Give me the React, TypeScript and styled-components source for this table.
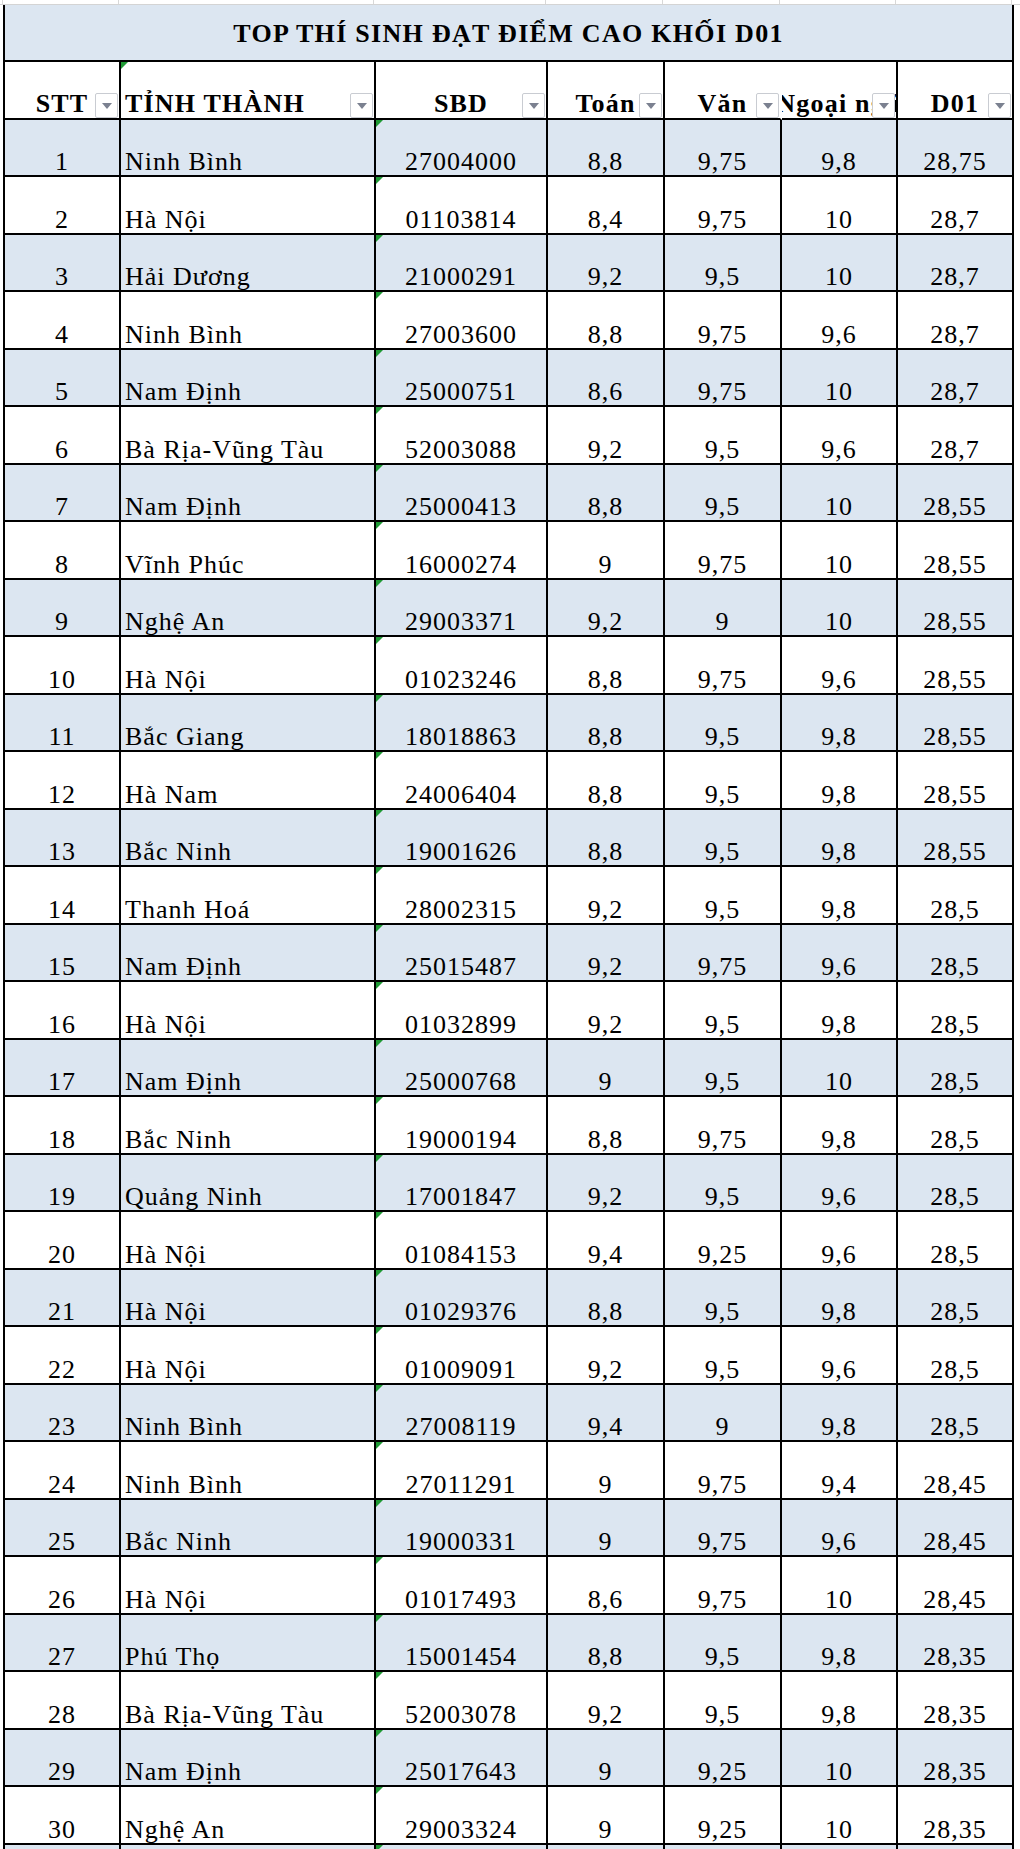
import * as React from "react";
import styled, { createGlobalStyle } from "styled-components";

const GlobalStyle = createGlobalStyle`
  html, body {
    margin: 0;
    padding: 0;
    background: #ffffff;
  }
`;

const SERIF = `"Liberation Serif", "Times New Roman", "DejaVu Serif", serif`;
const BLUE = "#dce6f1";
const COLS = "116px 255px 172px 117px 117px 116px 116px";

const Page = styled.div`
  width: 1020px;
  height: 1849px;
  overflow: hidden;
  background: #fff;
  font-family: ${SERIF};
  color: #000;
`;

const TopStrip = styled.div`
  display: grid;
  grid-template-columns: 3px ${COLS};
  height: 5px;
  box-sizing: border-box;
  border-bottom: 1px solid #d4d4d4;

  & > div {
    border-right: 1px solid #d8d8d8;
  }
`;

const Sheet = styled.div`
  margin-left: 3px;
  width: 1011px;
  border-left: 2px solid #000;
  box-sizing: border-box;
`;

const TitleRow = styled.div`
  height: 57px;
  box-sizing: border-box;
  background: ${BLUE};
  border-right: 2px solid #000;
  border-bottom: 2px solid #000;
  display: flex;
  align-items: center;
  justify-content: center;
  padding-top: 2px;
  font-family: ${SERIF};
  font-weight: 700;
  font-size: 26px;
  letter-spacing: 1.3px;
`;

const Row = styled.div<{ $tall?: boolean; $blue?: boolean }>`
  display: grid;
  grid-template-columns: ${COLS};
  height: ${(p) => (p.$tall ? 58 : 57)}px;
  background: ${(p) => (p.$blue ? BLUE : "#fff")};
`;

const Cell = styled.div<{ $align?: "left" | "center"; $open?: boolean }>`
  position: relative;
  box-sizing: border-box;
  border-right: 2px solid ${(p) => (p.$open ? "transparent" : "#000")};
  border-bottom: 2px solid #000;
  display: flex;
  align-items: flex-end;
  justify-content: ${(p) => (p.$align === "left" ? "flex-start" : "center")};
  padding: ${(p) => (p.$align === "left" ? "0 2px 0 4px" : "0 2px")};
  font-family: ${SERIF};
  font-size: 26px;
  line-height: 26px;
  letter-spacing: 1px;
  white-space: nowrap;
  overflow: hidden;
`;

const HeadCell = styled(Cell)`
  font-weight: 700;
  letter-spacing: 1.2px;
  padding-bottom: 1px;
`;

const FilterButton = styled.span`
  position: absolute;
  right: 1px;
  bottom: 0;
  width: 23px;
  height: 25px;
  box-sizing: border-box;
  background: #fff;
  border: 1px solid #c9ccd2;
  border-radius: 2px;
  display: flex;
  align-items: center;
  justify-content: center;

  &::after {
    content: "";
    border-left: 5px solid transparent;
    border-right: 5px solid transparent;
    border-top: 6px solid #7b8190;
  }
`;

const Marker = styled.span`
  position: absolute;
  left: 0;
  top: 0;
  width: 0;
  height: 0;
  border-top: 7px solid #1f9a35;
  border-right: 7px solid transparent;
`;

type Rec = [string, string, string, string, string, string];

const rows: Rec[] = [
  ["Ninh Bình", "27004000", "8,8", "9,75", "9,8", "28,75"],
  ["Hà Nội", "01103814", "8,4", "9,75", "10", "28,7"],
  ["Hải Dương", "21000291", "9,2", "9,5", "10", "28,7"],
  ["Ninh Bình", "27003600", "8,8", "9,75", "9,6", "28,7"],
  ["Nam Định", "25000751", "8,6", "9,75", "10", "28,7"],
  ["Bà Rịa-Vũng Tàu", "52003088", "9,2", "9,5", "9,6", "28,7"],
  ["Nam Định", "25000413", "8,8", "9,5", "10", "28,55"],
  ["Vĩnh Phúc", "16000274", "9", "9,75", "10", "28,55"],
  ["Nghệ An", "29003371", "9,2", "9", "10", "28,55"],
  ["Hà Nội", "01023246", "8,8", "9,75", "9,6", "28,55"],
  ["Bắc Giang", "18018863", "8,8", "9,5", "9,8", "28,55"],
  ["Hà Nam", "24006404", "8,8", "9,5", "9,8", "28,55"],
  ["Bắc Ninh", "19001626", "8,8", "9,5", "9,8", "28,55"],
  ["Thanh Hoá", "28002315", "9,2", "9,5", "9,8", "28,5"],
  ["Nam Định", "25015487", "9,2", "9,75", "9,6", "28,5"],
  ["Hà Nội", "01032899", "9,2", "9,5", "9,8", "28,5"],
  ["Nam Định", "25000768", "9", "9,5", "10", "28,5"],
  ["Bắc Ninh", "19000194", "8,8", "9,75", "9,8", "28,5"],
  ["Quảng Ninh", "17001847", "9,2", "9,5", "9,6", "28,5"],
  ["Hà Nội", "01084153", "9,4", "9,25", "9,6", "28,5"],
  ["Hà Nội", "01029376", "8,8", "9,5", "9,8", "28,5"],
  ["Hà Nội", "01009091", "9,2", "9,5", "9,6", "28,5"],
  ["Ninh Bình", "27008119", "9,4", "9", "9,8", "28,5"],
  ["Ninh Bình", "27011291", "9", "9,75", "9,4", "28,45"],
  ["Bắc Ninh", "19000331", "9", "9,75", "9,6", "28,45"],
  ["Hà Nội", "01017493", "8,6", "9,75", "10", "28,45"],
  ["Phú Thọ", "15001454", "8,8", "9,5", "9,8", "28,35"],
  ["Bà Rịa-Vũng Tàu", "52003078", "9,2", "9,5", "9,8", "28,35"],
  ["Nam Định", "25017643", "9", "9,25", "10", "28,35"],
  ["Nghệ An", "29003324", "9", "9,25", "10", "28,35"],
];

export default function App() {
  return (
    <Page>
      <GlobalStyle />
      <TopStrip>
        {Array.from({ length: 8 }).map((_, i) => (
          <div key={i} />
        ))}
      </TopStrip>
      <Sheet>
        <TitleRow>TOP THÍ SINH ĐẠT ĐIỂM CAO KHỐI D01</TitleRow>
        <Row $tall>
          <HeadCell>
            STT
            <FilterButton />
          </HeadCell>
          <HeadCell $align="left">
            <Marker />
            TỈNH THÀNH
            <FilterButton />
          </HeadCell>
          <HeadCell>
            SBD
            <FilterButton />
          </HeadCell>
          <HeadCell>
            Toán
            <FilterButton />
          </HeadCell>
          <HeadCell $open>
            Văn
            <FilterButton />
          </HeadCell>
          <HeadCell>
            Ngoại ngữ
            <FilterButton />
          </HeadCell>
          <HeadCell>
            D01
            <FilterButton />
          </HeadCell>
        </Row>
        {rows.map((r, i) => (
          <Row key={i} $blue={i % 2 === 0} $tall={i % 2 === 1}>
            <Cell>{i + 1}</Cell>
            <Cell $align="left">{r[0]}</Cell>
            <Cell>
              <Marker />
              {r[1]}
            </Cell>
            <Cell>{r[2]}</Cell>
            <Cell>{r[3]}</Cell>
            <Cell>{r[4]}</Cell>
            <Cell>{r[5]}</Cell>
          </Row>
        ))}
        <Row $blue>
          <Cell />
          <Cell />
          <Cell>
            <Marker />
          </Cell>
          <Cell />
          <Cell />
          <Cell />
          <Cell />
        </Row>
      </Sheet>
    </Page>
  );
}
